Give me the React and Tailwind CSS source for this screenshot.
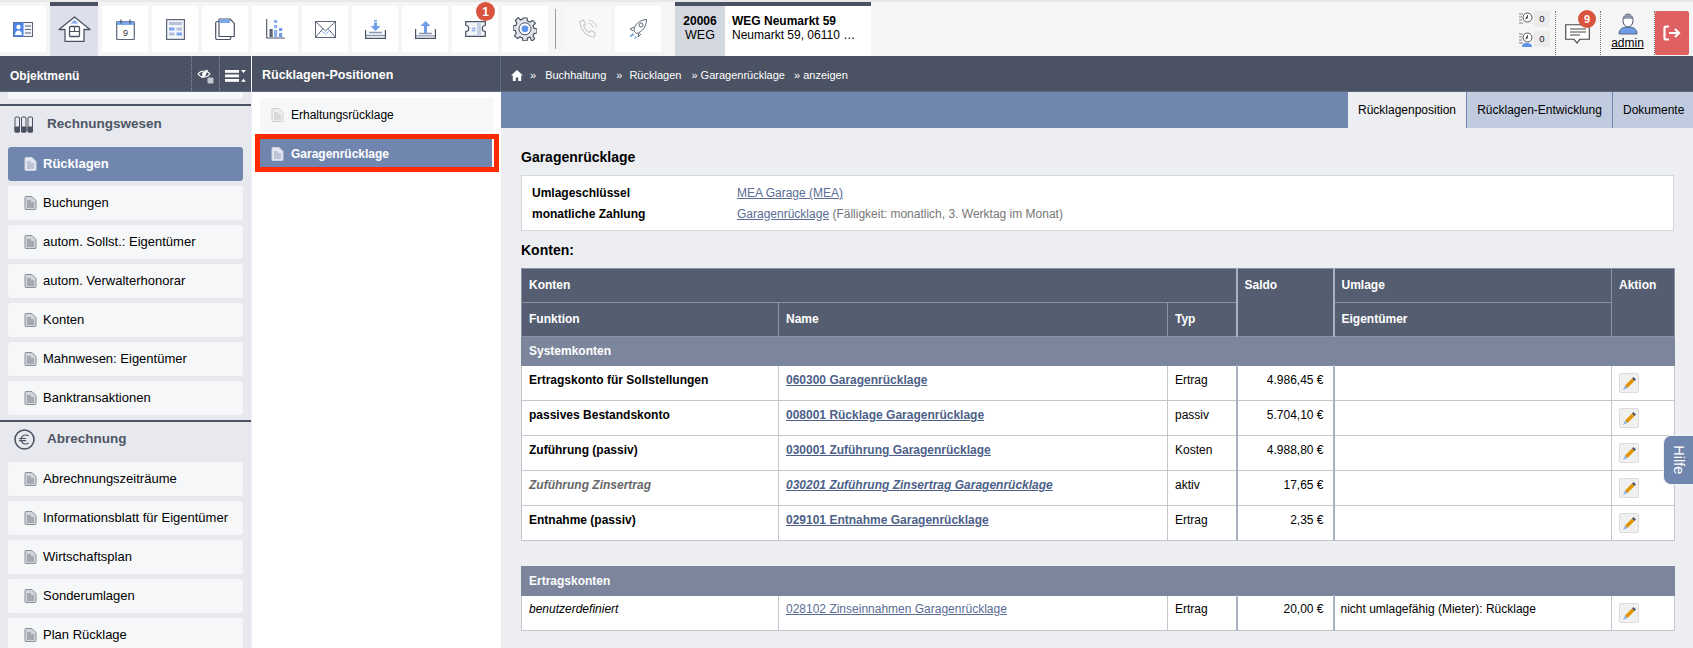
import React from 'react';

const S = ({ children, w = 24, h = 24, vb = '0 0 24 24', className = '' }) => (
  <svg width={w} height={h} viewBox={vb} fill="none" className={className}>{children}</svg>
);

const DocIcon = ({ light, faint }) => (
  <svg width="13" height="14" viewBox="0 0 13 14" className="shrink-0">
    <path d="M1 1.500a1 1 0 0 1 1-1h6l4 4v8a1 1 0 0 1-1 1H2a1 1 0 0 1-1-1z" fill={light ? '#e4e7ee' : faint ? '#eeeeee' : '#d2d4da'} stroke={light ? '#cfd5e2' : faint ? '#cfcfcf' : '#8a8f9a'} />
    <path d="M3 5h4M3 7h7M3 9h7M3 11h7" stroke={light ? '#8c9cbd' : faint ? '#bdbdbd' : '#6f7480'} strokeWidth="0.9" />
  </svg>
);

const topIcons = [
  <S w={20} h={15} vb="0 0 20 15"><rect x="0.5" y="0.5" width="19" height="14" fill="#f0f2f6" stroke="#5c6478" /><rect x="0.5" y="0.5" width="10" height="14" fill="#4f86e8" /><circle cx="5.500" cy="5" r="2.200" fill="#fff" /><path d="M2 13c0-6 7-6 7 0z" fill="#fff" /><path d="M12 4h6M12 7.500h6M12 11h6" stroke="#5c6478" /></S>,
  <S w={33} h={26} vb="0 0 33 26"><path d="M1 13.500 16.500 1 32 13.500h-6V25.300H7V13.500z" fill="#fff" stroke="#4a5263" strokeWidth="1.300" strokeLinejoin="round" /><path d="M12.500 7.500 16.500 4l4 3.500z" fill="#7aa7ee" /><rect x="11.500" y="10.500" width="10" height="10" rx="1" fill="#fff" stroke="#4a5263" strokeWidth="1.300" /><path d="M11.500 15.500h10M16.500 10.500v5" stroke="#4a5263" /></S>,
  <S w={19} h={21} vb="0 0 19 21"><rect x="0.700" y="2.500" width="17.600" height="18" rx="1" fill="#fff" stroke="#5c6478" strokeWidth="1.200" /><rect x="1" y="2.500" width="17" height="3.500" fill="#7aa7ee" /><path d="M5 0.500v4M14 0.500v4" stroke="#4a5263" strokeWidth="1.200" /><text x="9.500" y="16.500" textAnchor="middle" fontSize="9" fill="#333" fontFamily="Liberation Sans">9</text></S>,
  <S w={19} h={21} vb="0 0 19 21"><rect x="0.600" y="0.600" width="17.800" height="19.800" fill="#f3f5f9" stroke="#5c6478" strokeWidth="1.200" /><rect x="3" y="3" width="13" height="3" fill="#b4c0d9" /><rect x="3" y="8.500" width="5.500" height="3" fill="#7aa7ee" /><rect x="10.500" y="8.500" width="5.500" height="3" fill="#b4c0d9" /><rect x="3" y="13.500" width="5.500" height="3" fill="#b4c0d9" /><rect x="10.500" y="13.500" width="5.500" height="3" fill="#7aa7ee" /></S>,
  <S w={20} h={22} vb="0 0 20 22"><rect x="0.700" y="3.500" width="15" height="18" rx="1.500" fill="#fff" stroke="#4a5263" strokeWidth="1.200" /><path d="M4 1h11l4.300 4.300V18.500H4z" fill="#fff" stroke="#4a5263" strokeWidth="1.200" strokeLinejoin="round" /><path d="M4.500 1.500H15v3.500H4.500z" fill="#7aa7ee" /></S>,
  <S w={19} h={20} vb="0 0 19 20"><path d="M0.700 0v19h18" stroke="#4a5263" strokeWidth="1.100" /><rect x="3.500" y="10" width="3.200" height="8" fill="#5c6478" /><rect x="8" y="1" width="3.200" height="3" fill="#8db2f2" /><rect x="8" y="6" width="3.200" height="3" fill="#8db2f2" /><rect x="8" y="11" width="3.200" height="7" fill="#8db2f2" /><rect x="13" y="9" width="3.200" height="3" fill="#6f9de8" /><rect x="13" y="14" width="3.200" height="4" fill="#6f9de8" /></S>,
  <S w={21} h={17} vb="0 0 21 17"><rect x="0.500" y="0.500" width="20" height="16" fill="#fff" stroke="#5c6478" /><path d="m0.500 0.500 10 9.500 10-9.500M0.500 16.500l7.500-9M20.500 16.500l-7.500-9" stroke="#5c6478" /><path d="M6 9.500 10.500 13l4.500-3.500" stroke="#8db2f2" /></S>,
  <S w={21} h={20} vb="0 0 21 20"><path d="M9 1h3v1.500H9zM9 3.500h3V7h3.500l-5 5-5-5H9z" fill="#6f9de8" /><path d="M0.600 11v8.400h19.800V11" stroke="#4a5263" strokeWidth="1.200" /><path d="M4 13.500h13M1 16.500h19" stroke="#8795ad" strokeWidth="1.300" /></S>,
  <S w={21} h={20} vb="0 0 21 20"><path d="M9 14V7H5.500l5-5 5 5H12v7z" fill="#6f9de8" /><path d="M0.600 10v9.400h19.800V10" stroke="#4a5263" strokeWidth="1.200" /><path d="M4 14.500h13M1 16.800h19" stroke="#8795ad" strokeWidth="1.300" /></S>,
  <S w={21} h={16} vb="0 0 21 16"><path d="M0.700 0.700h19.600v3.800a3 3 0 0 0 0 6v4.800H0.700v-4.800a3 3 0 0 0 0-6z" fill="#f2f4f8" stroke="#4a5263" strokeWidth="1.200" /><rect x="12" y="1" width="4" height="14" fill="#c6cfe0" /><text x="6.500" y="11" fontSize="7" fontStyle="italic" fill="#5f93ea" fontFamily="Liberation Sans">#</text></S>,
  <S w={24} h={24} vb="0 0 24 24"><path d="M10 1h4l.6 3 2.400 1 2.600-1.600 2.800 2.800L20 8.800l1 2.400 3 .8v4l-3 .6-1 2.400 1.600 2.600-2.800 2.800L17 20l-2.400 1-.6 2.800h-4L9.400 21 7 20l-2.600 1.600-2.800-2.800L3.200 16l-1-2.400L0 13V9l2.800-.6 1-2.400L2.400 3.400 5.200.6 7.600 3l2-1z" fill="#e1e4ec" stroke="#4a5263" strokeWidth="1.200" /><circle cx="12" cy="11.800" r="6" fill="#fff" stroke="#4a5263" /><circle cx="12" cy="11.800" r="3.400" fill="#5f93ea" /></S>,
];

const SideItem = ({ label, active }) => (
  <div className={`mx-2 mb-[5px] h-[34px] rounded-[3px] flex items-center pl-[16px] gap-[6px] text-[13px] shrink-0 ${active ? 'bg-[#7186ae] text-white font-bold' : 'bg-[#f6f7f9] text-black'}`}>
    <DocIcon light={active} />
    <span>{label}</span>
  </div>
);

const SideHead = ({ icon, label, first }) => (
  <div className={`flex items-center border-t-[2px] border-[#4a5263] shrink-0 ${first ? 'h-[43px] pb-[5px]' : 'h-[42px] pb-[6px]'}`}>
    <span className="w-[47px] flex justify-center pl-[1px]">{icon}</span>
    <span className="text-[13.500px] font-bold text-[#4e5666]">{label}</span>
  </div>
);

const Pencil = () => (
  <span className="inline-flex w-[20px] h-[20px] bg-[#f0f0f0] border border-[#dcdcdc] rounded-[2px] items-center justify-center">
    <svg width="15" height="15" viewBox="0 0 15 15">
      <path d="M3 9.500 10 2.500l2.500 2.500-7 7z" fill="#e09400" />
      <path d="M10 2.500l1.500-1.500 2.500 2.500L12.500 5z" fill="#4a5263" />
      <path d="M3 9.500 5.500 12 1 14z" fill="#8db2f2" />
    </svg>
  </span>
);

const rows = [
  ['Ertragskonto für Sollstellungen', '060300 Garagenrücklage', 'Ertrag', '4.986,45 €'],
  ['passives Bestandskonto', '008001 Rücklage Garagenrücklage', 'passiv', '5.704,10 €'],
  ['Zuführung (passiv)', '030001 Zuführung Garagenrücklage', 'Kosten', '4.988,80 €'],
  ['Zuführung Zinsertrag', '030201 Zuführung Zinsertrag Garagenrücklage', 'aktiv', '17,65 €', true],
  ['Entnahme (passiv)', '029101 Entnahme Garagenrücklage', 'Ertrag', '2,35 €'],
];

const th = 'border border-[#8b93a3] px-[7px] text-left align-middle font-bold text-white';
const td = 'border border-[#c3c6cc] px-[7px] bg-white align-top pt-[5px]';
const td2 = 'border border-[#c3c6cc] px-[7px] bg-white align-top pt-[4px]';
const thick = 'border-l-[2px] border-l-[#a8b2c4]';
const Cols = () => (
  <colgroup>
    <col className="w-[257px]" />
    <col className="w-[389px]" />
    <col className="w-[69px]" />
    <col className="w-[97px]" />
    <col className="w-[278px]" />
    <col className="w-[63px]" />
  </colgroup>
);

export default function App() {
  return (
    <div className="w-[1693px] h-[648px] overflow-hidden flex flex-col bg-white text-[12px] text-black relative font-['Liberation_Sans',Arial,sans-serif]">
      <div className="h-[56px] shrink-0 bg-[#f5f5f5] border-t-2 border-[#e8e8e8] flex items-start pt-[4px]">
        {topIcons.map((icon, i) => (
          <div key={i} className={`relative flex items-center justify-center mr-[4px] ${i === 1 ? 'w-[48px] h-[54px] bg-[#dde0ea] border-t-4 border-[#4a5263] -mt-[4px] pb-[4px]' : 'w-[46px] h-[46px] bg-white'}`}>
            {icon}
            {i === 9 && <span className="absolute -top-[4px] right-[3px] w-[19px] h-[19px] rounded-full bg-[#d9533f] text-white text-[12px] font-bold flex items-center justify-center">1</span>}
          </div>
        ))}
        <div className="w-px h-[40px] bg-[#9a9a9a] mt-[3px] ml-[3px] mr-[9px]" />
        <div className="w-[46px] h-[46px] mr-[4px] bg-[#f8f8f8] flex items-center justify-center">
          <S w={20} h={20} vb="0 0 20 20"><path d="M2 2.500 5.500 1l2 4-2 1.500c1 3 3 5.500 6 7l1.500-2 4 2L16.500 18C8 18 2 10 2 2.500z" fill="none" stroke="#c9c9c9" strokeWidth="1.100" /><path d="M10 4a6 6 0 0 1 5 5M10.500 1a9 9 0 0 1 8 8" stroke="#d4d4d4" strokeWidth="1.100" /></S>
        </div>
        <div className="w-[46px] h-[46px] mr-[14px] bg-white flex items-center justify-center">
          <S w={20} h={22} vb="0 0 20 22"><path d="M6 13C6 7 11 2 18.500 1.500 18.500 9 14 14 8.500 15.500z" fill="#fff" stroke="#5c6478" /><circle cx="13" cy="7" r="2" fill="#fff" stroke="#5c6478" /><path d="M6 9 2 11l3 2M11 15l-1 4 3-3" stroke="#5c6478" /><path d="m5 15-3.500 3.500L3 19l3-2z" fill="#6f9de8" /><path d="m7.500 18-1.500 3 3-1z" fill="#6f9de8" /></S>
        </div>
        <div className="-mt-[4px] h-[54px] w-[196px] flex flex-col border-t-4 border-[#4a5263] bg-white">
          <div className="flex h-full leading-[14px] text-[12px]">
            <div className="w-[50px] bg-[#d3d7e0] text-center pt-[8px]">
              <div className="font-bold">20006</div>
              <div className="text-[12.500px]">WEG</div>
            </div>
            <div className="pl-[7px] pt-[8px]">
              <div className="font-bold">WEG Neumarkt 59</div>
              <div>Neumarkt 59, 06110 …</div>
            </div>
          </div>
        </div>
        <div className="ml-auto flex items-start">
          <div className="w-[33px] mr-[3px] mt-[5px] flex flex-col gap-[4px]">
            {[0, 1].map((k) => (
              <div key={k} className="flex h-[16px] items-center">
                <span className="w-[14px] h-[15px] flex items-center justify-center">
                  <svg width="14" height="15" viewBox="0 0 14 15"><path d="M0 2h4M0 5h3M0 8h3M0 11h4" stroke="#bcbcbc" strokeWidth="2" /><circle cx="8.500" cy="5.500" r="4.500" fill="#fff" stroke="#555" /><path d="M8.500 3v3l-2 1" stroke="#555" />{k === 1 && <path d="M3 15c0-3 2-4 5-4s5 1 5 4z" fill="#5f93ea" />}</svg>
                </span>
                <span className="w-[16px] h-[16px] ml-[1px] bg-[#ebebeb] text-[9.500px] text-[#222] flex items-center justify-center">0</span>
              </div>
            ))}
          </div>
          <div className="w-px h-[44px] mt-[5px] border-l border-dotted border-[#777]" />
          <div className="relative w-[44px] h-[46px] flex items-center justify-center">
            <svg width="25" height="21" viewBox="0 0 25 21" className="mt-[11px] -ml-[2px]"><path d="M.7.7h23.600v14.600h-9.500L12 19l-3-3.700H.7z" fill="#fff" stroke="#444" strokeWidth="1.100" /><path d="M5 5h16M5 8h16M5 11h10" stroke="#444" /></svg>
            <span className="absolute top-[4px] right-[4px] w-[18px] h-[18px] rounded-full bg-[#d9533f] text-white text-[11px] font-bold flex items-center justify-center">9</span>
          </div>
          <div className="w-px h-[44px] mt-[5px] border-l border-dotted border-[#777]" />
          <div className="w-[53px] h-[46px] flex flex-col items-center pt-[7px]">
            <svg width="20" height="22" viewBox="0 0 20 22"><path d="M1 21c0-5 3-7 9-7s9 2 9 7z" fill="#6f9de8" stroke="#4a5263" strokeWidth="0.800" /><ellipse cx="10" cy="7.500" rx="5" ry="6.500" fill="#fff" stroke="#4a5263" /><path d="M5.200 6.500c1-6.500 8.600-6.500 9.600 0-3-1.500-6.600-1.500-9.600 0z" fill="#8a93a5" /></svg>
            <span className="underline text-[12px] leading-[14px] text-black mt-[1px]">admin</span>
          </div>
          <div className="w-px h-[44px] mt-[5px] border-l border-dotted border-[#777]" />
          <div className="w-[34px] h-[44px] mt-[5px] mr-[4px] bg-[#de6060] rounded-[2px] flex items-center justify-center">
            <svg width="18" height="16" viewBox="0 0 18 16" fill="none" stroke="#fff" strokeWidth="2.200"><path d="M6 1.500H3a1.500 1.500 0 0 0-1.500 1.500v10A1.500 1.500 0 0 0 3 14.500h3" /><path d="M6 8h10M12 4l4 4-4 4" /></svg>
          </div>
        </div>
      </div>

      <div className="flex-1 flex min-h-0">
        <aside className="w-[252px] shrink-0 flex flex-col bg-[#e8e9ee] border-r border-[#eef0f3]">
          <div className="h-[36px] shrink-0 bg-[#4a5263] text-white font-bold text-[12px] flex items-center pl-[10px] border-b border-[#5e6a80]">
            <span className="flex-1 pt-[4px]">Objektmenü</span>
            <span className="w-[28px] h-full flex items-center justify-center border-l border-dotted border-[#8a93a5] pt-[4px]">
              <svg width="17" height="16" viewBox="0 0 17 16" fill="none"><path d="M1 6c3-4 9-4 12 0-3 4-9 4-12 0z" stroke="#fff" strokeWidth="1.100" /><path d="M4 10 9.500 1.500 11 2.500 7 9.500z" fill="#fff" /><circle cx="7" cy="6" r="2" fill="#fff" /><rect x="10.500" y="9.500" width="6" height="6" rx="1.200" fill="#c3c8d2" /></svg>
            </span>
            <span className="w-[32px] h-full flex items-center justify-center border-l border-dotted border-[#8a93a5] pt-[4px]">
              <svg width="22" height="12" viewBox="0 0 22 12" fill="#fff"><rect width="14" height="2.800" /><rect y="4.500" width="14" height="2.800" /><rect y="9" width="14" height="2.800" /><path d="m16 0 5 0-2.500 3zM16 11.800h5l-2.500-3z" /></svg>
            </span>
          </div>
          <div className="h-[7px] mx-2 bg-[#f6f7f9] rounded-b-[3px] shrink-0 mb-[5px]" />
          <div className="flex-1 overflow-hidden flex flex-col">
            <SideHead first label="Rechnungswesen" icon={<svg width="20" height="17" viewBox="0 0 20 17" fill="none" stroke="#4a5263"><rect x="1" y="1" width="4.500" height="15" rx="1" /><rect x="7.500" y="1" width="4.500" height="15" rx="1" /><rect x="14" y="1" width="4.500" height="15" rx="1" /><path d="M1 11h4.500v5H1zM7.500 11H12v5H7.500zM14 11h4.500v5H14z" fill="#4a5263" /></svg>} />
            <SideItem label="Rücklagen" active />
            <SideItem label="Buchungen" />
            <SideItem label="autom. Sollst.: Eigentümer" />
            <SideItem label="autom. Verwalterhonorar" />
            <SideItem label="Konten" />
            <SideItem label="Mahnwesen: Eigentümer" />
            <SideItem label="Banktransaktionen" />
            <SideHead label="Abrechnung" icon={<svg width="21" height="21" viewBox="0 0 21 21" fill="none" stroke="#4a5263"><circle cx="10.500" cy="10.500" r="9.500" strokeWidth="1.600" /><path d="M14.500 7a4.500 4.500 0 1 0 0 7M5 9.500h7M5 11.700h7" strokeWidth="1.200" /></svg>} />
            <SideItem label="Abrechnungszeiträume" />
            <SideItem label="Informationsblatt für Eigentümer" />
            <SideItem label="Wirtschaftsplan" />
            <SideItem label="Sonderumlagen" />
            <SideItem label="Plan Rücklage" />
          </div>
        </aside>

        <div className="w-[249px] shrink-0 flex flex-col bg-white">
          <div className="h-[36px] shrink-0 bg-[#4a5263] text-white font-bold text-[12.500px] flex items-center pl-[10px] pt-[4px] border-b border-[#5e6a80] border-r">Rücklagen-Positionen</div>
          <div className="pl-[8px] pr-[7px] pt-[6px]">
            <div className="h-[34px] bg-[#f6f7f9] rounded-[3px] flex items-center pl-[11px] gap-[7px] text-[12px]">
              <DocIcon faint />
              <span>Erhaltungsrücklage</span>
            </div>
          </div>
          <div className="ml-[3px] mr-[2px] mt-[2px] h-[38px] border-[5px] border-[#ff2a00] bg-white">
            <div className="h-full bg-[#7186ae] border-r-[2px] border-white flex items-center pl-[11px] pt-[1px] gap-[7px] font-bold text-white text-[12px]">
              <DocIcon light />
              <span>Garagenrücklage</span>
            </div>
          </div>
        </div>

        <main className="flex-1 min-w-0 flex flex-col bg-[#eceef2]">
          <div className="h-[36px] shrink-0 bg-[#4a5263] text-white text-[11px] flex items-center pl-[10px] pt-[4px] whitespace-pre border-b border-[#5e6a80]">
            <svg width="12" height="11" viewBox="0 0 12 11" fill="#fff" className="mr-[7px]"><path d="M6 0 0 5.500h1.800V11h3V7.500h2.400V11h3V5.500H12z" /></svg>
            <span>»</span>
            <span className="ml-[9px]">Buchhaltung</span>
            <span className="ml-[10px]">»</span>
            <span className="ml-[7px]">Rücklagen</span>
            <span className="ml-[10px]">» Garagenrücklage</span>
            <span className="ml-[9px]">» anzeigen</span>
          </div>
          <div className="h-[36px] shrink-0 bg-[#7186ae] flex justify-end items-stretch text-[12px]">
            <div className="w-[118px] bg-[#eceef2] flex items-center justify-center">Rücklagenposition</div>
            <div className="w-[146px] bg-[#c1cbdf] border-l border-[#7186ae] flex items-center justify-center">Rücklagen-Entwicklung</div>
            <div className="w-[81px] bg-[#c1cbdf] border-l border-[#7186ae] flex items-center pl-[10px]">Dokumente</div>
          </div>
          <div className="pl-[20px] pr-[19px] flex-1">
            <h1 className="text-[14px] font-bold leading-[16px] mt-[21px] mb-[10px]">Garagenrücklage</h1>
            <div className="h-[56px] bg-white border border-[#d3d6dd] pl-[10px] pt-[7px] text-[12px] leading-[20.500px]">
              <div className="flex">
                <span className="w-[205px] font-bold">Umlageschlüssel</span>
                <a className="underline text-[#5a6c94]">MEA Garage (MEA)</a>
              </div>
              <div className="flex">
                <span className="w-[205px] font-bold">monatliche Zahlung</span>
                <span className="text-[#777]"><a className="underline text-[#5a6c94]">Garagenrücklage</a> (Fälligkeit: monatlich, 3. Werktag im Monat)</span>
              </div>
            </div>
            <div className="text-[14px] font-bold leading-[16px] mt-[11px] mb-[10px]">Konten:</div>
            <table className="w-[1153px] table-fixed border-collapse">
              <Cols />
              <thead>
                <tr className="h-[34px] bg-[#555e70]">
                  <th colSpan={3} className={`${th} pb-[1px]`}>Konten</th>
                  <th rowSpan={2} className={`${th} ${thick} align-top pt-[7px]`}>Saldo</th>
                  <th className={`${th} ${thick} pb-[1px]`}>Umlage</th>
                  <th rowSpan={2} className={`${th} align-top pt-[7px]`}>Aktion</th>
                </tr>
                <tr className="h-[34px] bg-[#555e70]">
                  <th className={`${th} pb-[1px]`}>Funktion</th>
                  <th className={`${th} pb-[1px]`}>Name</th>
                  <th className={`${th} pb-[1px]`}>Typ</th>
                  <th className={`${th} ${thick} pb-[1px]`}>Eigentümer</th>
                </tr>
              </thead>
              <tbody>
                <tr className="h-[29px] bg-[#7b859c]"><td colSpan={6} className="border border-[#7b859c] px-[7px] font-bold text-white">Systemkonten</td></tr>
                {rows.map((r) => (
                  <tr key={r[0]} className="h-[35px]">
                    <td className={`${td} font-bold ${r[4] ? 'italic text-[#666]' : ''}`}>{r[0]}</td>
                    <td className={`${td} font-bold`}><a className={`underline text-[#4d5f8a] ${r[4] ? 'italic' : ''}`}>{r[1]}</a></td>
                    <td className={td}>{r[2]}</td>
                    <td className={`${td} ${thick} text-right pr-[9px]`}>{r[3]}</td>
                    <td className={`${td} ${thick}`}></td>
                    <td className={`${td} !pt-[7px]`}><Pencil /></td>
                  </tr>
                ))}
              </tbody>
            </table>
            <table className="w-[1153px] table-fixed border-collapse mt-[25px]">
              <Cols />
              <tbody>
                <tr className="h-[29px] bg-[#7b859c]"><td colSpan={6} className="border border-[#7b859c] px-[7px] font-bold text-white">Ertragskonten</td></tr>
                <tr className="h-[35px]">
                  <td className={`${td2} italic`}>benutzerdefiniert</td>
                  <td className={td2}><a className="underline text-[#5a6c94]">028102 Zinseinnahmen Garagenrücklage</a></td>
                  <td className={td2}>Ertrag</td>
                  <td className={`${td2} ${thick} text-right pr-[9px]`}>20,00 €</td>
                  <td className={`${td2} ${thick} pl-[6px]`}>nicht umlagefähig (Mieter): Rücklage</td>
                  <td className={`${td2} !pt-[7px]`}><Pencil /></td>
                </tr>
              </tbody>
            </table>
          </div>
        </main>
      </div>

      <div className="absolute right-0 top-[435px] w-[30px] h-[50px] bg-[#7186ae] rounded-l-[8px] flex items-center justify-center border border-[#f0f1f4] border-r-0">
        <span className="text-white text-[14.500px] rotate-90 whitespace-nowrap">Hilfe</span>
      </div>
    </div>
  );
}
